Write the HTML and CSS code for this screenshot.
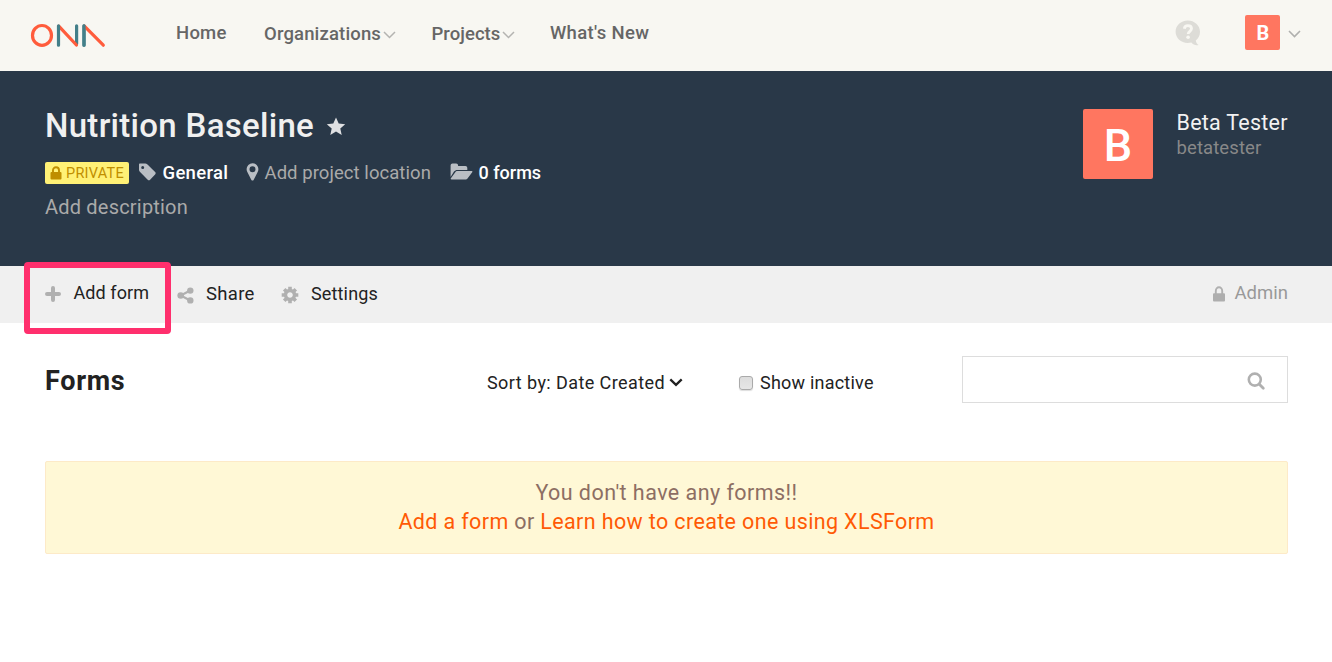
FILE: index.html
```
<!DOCTYPE html>
<html lang="en">
<head>
<meta charset="utf-8">
<title>Nutrition Baseline</title>
<link rel="stylesheet" href="styles.css">
</head>
<body>
<header class="topbar">
  <svg class="logo" width="80" height="30" viewBox="28 20 80 30" fill="none" stroke-width="3.2" stroke-linecap="round">
    <ellipse cx="42" cy="35.4" rx="9.5" ry="9.9" stroke="#ff5c3c"/>
    <path d="M76.6 25.8V44M84 25.8v19.4" stroke="#437f89"/>
    <path d="M58.8 26.2 76.4 45M84.4 26.2 103.3 45.2" stroke="#ff5c3c"/>
    <path d="M58.5 25.8v19.4M84 25.8v19.4" stroke="#437f89"/>
  </svg>
  <nav class="nav">
    <a class="nav-item home">Home</a>
    <a class="nav-item drop orgs"><span>Organizations</span><svg width="13" height="8" viewBox="0 0 13 8"><path d="M1 1l5.5 5.5L12 1" fill="none" stroke="#b4b4b1" stroke-width="1.5"/></svg></a>
    <a class="nav-item drop projects"><span>Projects</span><svg width="13" height="8" viewBox="0 0 13 8"><path d="M1 1l5.5 5.5L12 1" fill="none" stroke="#b4b4b1" stroke-width="1.5"/></svg></a>
    <a class="nav-item news">What's New</a>
  </nav>
  <svg class="help" width="26" height="26" viewBox="0 0 26 26">
    <path d="M12.7.6C19.5.6 25 5.5 25 11.800c0 3.700-1.600 6.700-4.200 8.700.3 2 1.300 3.500 2.800 4.500-2.800.7-5.400-.3-7.200-2.500-1.200.3-2.400.5-3.700.5C5.900 23 .6 18 .6 11.800S5.900.6 12.700.6z" fill="#dddcd7"/>
    <path d="M9.300 8.700c.3-2 1.700-3 3.600-3 2.100 0 3.600 1.100 3.600 2.900 0 2.700-3.300 2.700-3.300 5.400" fill="none" stroke="#f8f7f2" stroke-width="2.800"/>
    <circle cx="13.100" cy="17.300" r="1.800" fill="#f8f7f2"/>
  </svg>
  <div class="avatar small">B</div>
  <svg class="user-chevron" width="13" height="8" viewBox="0 0 13 8"><path d="M1 1l5.500 5.500L12 1" fill="none" stroke="#b0b0ae" stroke-width="1.600"/></svg>
</header>

<section class="project">
  <div class="details">
    <div class="title-row">
      <h1>Nutrition Baseline</h1>
      <svg class="star" width="20" height="19" viewBox="0 0 20 19"><path d="M10 .5l2.700 6 6.500.7-4.900 4.300 1.400 6.400L10 14.600l-5.700 3.300 1.400-6.400L.8 7.200l6.500-.7z" fill="#dfe0e2"/></svg>
    </div>
    <div class="meta">
      <span class="badge"><svg width="12" height="14" viewBox="0 0 12 14"><path d="M3 7V4.200a3 3 0 0 1 6 0V7" fill="none" stroke="#bf8e00" stroke-width="1.900"/><rect x=".5" y="6" width="11" height="7.500" rx="1" fill="#bf8e00"/></svg>PRIVATE</span>
      <svg class="tag" width="19" height="18" viewBox="0 0 19 18"><path fill-rule="evenodd" d="M2 .6h5.200c.8 0 1.600.3 2.300 1l7.600 7.500c.8.8.8 1.600 0 2.400l-5 5.200c-.8.800-1.600.800-2.400 0L2.100 9C1.400 8.300 1 7.500 1 6.700V1.600C1 1 1.400.6 2 .6zM4.700 2.900a1.500 1.500 0 1 0 0 3 1.500 1.500 0 0 0 0-3z" fill="#b9bec4"/></svg>
      <span class="general">General</span>
      <svg class="pin" width="13" height="18" viewBox="0 0 13 18"><path fill-rule="evenodd" d="M6.500.2A5.900 5.900 0 0 1 12.400 6.100c0 1.100-.2 1.900-.6 2.700l-4.200 8.100c-.5.900-1.700.9-2.200 0L1.200 8.800C.8 8 .6 7.200.6 6.100A5.900 5.900 0 0 1 6.500.2zm0 3a3 3 0 1 0 0 6 3 3 0 0 0 0-6z" fill="#b9bec4"/></svg>
      <span class="location">Add project location</span>
      <svg class="folder" width="23" height="18" viewBox="0 0 23 18"><path d="M.6 14V2.500C.6 1.400 1.500.6 2.500.6h3.700c1.100 0 1.900.8 1.900 1.900v.6h7.300c1.100 0 1.900.8 1.900 1.900v2H7.300C6 7 4.900 7.600 4 8.600z" fill="#b9bec4"/><path d="M7.500 8.100h14.100c.8 0 1.100.6.6 1.200l-4.300 5.600c-.8 1-1.600 1.500-2.700 1.500H1.500c-.8 0-1.100-.6-.6-1.200l4.200-5.700c.7-.9 1.400-1.400 2.400-1.400z" fill="#b9bec4"/></svg>
      <span class="count">0 forms</span>
    </div>
    <div class="description">Add description</div>
  </div>
  <div class="avatar large">B</div>
  <div class="owner">
    <div class="owner-name">Beta Tester</div>
    <div class="owner-id">betatester</div>
  </div>
</section>

<div class="toolbar">
  <a class="tool add"><svg width="16" height="16" viewBox="0 0 16 16"><path d="M8 2v12M2 8h12" stroke="#b0b0b0" stroke-width="4" stroke-linecap="round"/></svg><span>Add form</span></a>
  <a class="tool share"><svg width="17" height="17" viewBox="0 0 17 17"><path d="M13.300 3.600 3.700 8.500l9.600 4.900" fill="none" stroke="#b0b0b0" stroke-width="2.200"/><g fill="#b0b0b0"><circle cx="13.300" cy="3.600" r="3.200"/><circle cx="3.700" cy="8.500" r="3.300"/><circle cx="13.300" cy="13.400" r="3.200"/></g></svg><span>Share</span></a>
  <a class="tool settings"><svg width="18" height="18" viewBox="-9 -9 18 18"><g stroke="#b0b0b0" stroke-width="3.600"><path d="M0-8.300V-4M0 8.300V4M-8.300 0H-4M8.300 0H4M-5.800-5.800-3-3M5.800-5.800 3-3M-5.800 5.800-3 3M5.800 5.800 3 3"/></g><circle r="4.500" fill="none" stroke="#b0b0b0" stroke-width="3.400"/></svg><span>Settings</span></a>
  <a class="tool admin"><svg width="14" height="16" viewBox="0 0 14 16"><path d="M3.800 8V5a3.200 3.700 0 0 1 6.400 0v3" fill="none" stroke="#b0b0b0" stroke-width="1.900"/><rect x="1" y="7.300" width="12" height="8.200" rx="1" fill="#aeaeae"/></svg><span>Admin</span></a>
  <div class="highlight"></div>
</div>

<main class="content">
  <div class="filters">
    <h2>Forms</h2>
    <div class="sort"><span>Sort by: Date Created</span><svg width="14" height="9" viewBox="0 0 14 9"><path d="M1.300 1.300 7 6.800l5.700-5.500" fill="none" stroke="#222" stroke-width="2.300"/></svg></div>
    <label class="inactive"><i class="check"></i><span>Show inactive</span></label>
    <div class="search"><svg width="18" height="18" viewBox="0 0 18 18" fill="none" stroke="#b0b0b0"><circle cx="7.800" cy="7.600" r="6" stroke-width="2.600"/><path d="M12.300 12.200l4 4" stroke-width="2.800" stroke-linecap="round"/></svg></div>
  </div>
  <div class="notice">
    <div class="empty">You don't have any forms!!</div>
    <div class="actions"><a>Add a form</a> or <a>Learn how to create one using XLSForm</a></div>
  </div>
</main>
</body>
</html>
```
FILE: styles.css
```
* { box-sizing: border-box; }
body { margin: 0; background: #fff; font: 18px/24px Roboto, "Liberation Sans", sans-serif; color: #222; height: 662px; overflow: hidden; }
svg { display: block; flex: none; overflow: visible; }
span, a, h1, h2, div { white-space: nowrap; }

.topbar { height: 71px; background: #f8f7f2; display: flex; align-items: flex-start; padding-left: 28px; }
.logo { margin-top: 20px; }
.nav { display: grid; grid-template-columns: 88px 167.5px 118.5px 1fr; margin-left: 68px; width: 499px; }
.nav-item { font-size: 18.5px; font-weight: 500; line-height: 66px; color: #666; }
.drop { display: flex; line-height: 68px; }
.drop svg { margin: 31px 0 0 1.5px; }
.home { letter-spacing: .25px; }
.orgs span { letter-spacing: .15px; }
.projects span { letter-spacing: .05px; }
.news { letter-spacing: .33px; }
.help { margin: 20px 0 0 500px; }
.avatar { background: #ff7660; color: #fff; text-align: center; flex: none; border-radius: 2px; }
.small { width: 35px; height: 35px; margin: 15px 0 0 44px; padding-left: 1px; font-size: 20px; font-weight: 700; line-height: 37px; }
.user-chevron { margin: 30px 0 0 8px; }

.project { height: 195px; background: #293848; display: flex; padding: 38px 44px 0 45px; }
.details { width: 1038px; }
.title-row { display: flex; height: 35px; }
h1 { margin: 0; width: 281px; font-size: 33px; font-weight: 500; line-height: 34px; letter-spacing: .3px; color: #f0f0f0; }
.star { margin: 8px 0 0; }
.meta { display: flex; margin-top: 17px; height: 26px; font-size: 18.5px; line-height: 24px; }
.badge { display: flex; width: 84px; height: 22px; margin-top: 1px; padding-left: 5px; background: #fff176; border-radius: 2px; color: #bf8e00; font-size: 14.5px; line-height: 24px; letter-spacing: .25px; }
.badge svg { margin: 3.5px 4px 0 0; }
.tag { margin: 1.5px 5.5px 0 9px; }
.general { width: 84px; font-weight: 500; letter-spacing: .3px; color: #fff; }
.pin { margin: 1.5px 5.5px 0 -.5px; }
.location { width: 185px; letter-spacing: .06px; color: #aaa; }
.folder { margin: 1.5px 6px 0 0; }
.count { font-size: 18px; font-weight: 500; color: #fff; }
.description { margin-top: 6px; font-size: 20px; line-height: 28px; letter-spacing: .2px; color: #aaa; }
.large { width: 70px; height: 70px; font-size: 45px; font-weight: 500; line-height: 73px; }
.owner { margin-left: 23.5px; }
.owner-name { font-size: 21.5px; line-height: 27px; letter-spacing: .25px; color: #f2f2f2; }
.owner-id { font-size: 18.5px; line-height: 25px; letter-spacing: .1px; color: #888; }

.toolbar { position: relative; height: 57px; background: #f0f0f0; display: flex; padding: 0 44px 0 45px; }
.tool { display: flex; line-height: 54px; }
.share, .settings { line-height: 56px; }
.add { width: 131.5px; }
.add svg { margin: 19.5px 12.5px 0 0; }
.add span { letter-spacing: .08px; }
.share { width: 104.5px; font-size: 18.5px; }
.share svg { margin: 20.5px 12.5px 0 0; }
.share span { letter-spacing: .3px; }
.settings svg { margin: 20px 12px 0 0; }
.settings span { letter-spacing: .15px; }
.admin { margin-left: auto; color: #999; font-size: 18.5px; }
.admin svg { margin: 19.5px 8.5px 0 0; }
.highlight { position: absolute; left: 24px; top: -4px; width: 147px; height: 72px; border: 6.5px solid #ff2f6d; border-radius: 4px; }

.content { padding: 33px 44px 0 45px; }
.filters { display: flex; height: 47px; font-size: 18px; line-height: 54px; }
h2 { margin: 0; width: 442px; font-size: 27px; font-weight: 700; line-height: 51px; letter-spacing: .7px; }
.sort { display: flex; width: 252px; }
.sort span { letter-spacing: .42px; }
.sort svg { margin: 22px 0 0 4px; }
.inactive { display: flex; width: 223px; }
.inactive span { letter-spacing: .22px; }
.check { width: 14px; height: 14px; margin: 20px 7px 0 0; border: 1px solid #aaa; border-radius: 3px; background: linear-gradient(#ddd, #e6e6e6); box-shadow: 0 1px 1px #ddd; }
.search { width: 326px; height: 47px; border: 1px solid #ddd; padding: 15px 0 0 283.5px; }
.notice { margin-top: 58px; height: 93px; border: 1px solid #fdeac8; border-radius: 2px; background: #fff8d6; padding-top: 16px; text-align: center; font-size: 21.5px; line-height: 29px; letter-spacing: .45px; color: #8d6e63; }
.actions { letter-spacing: .37px; }
.notice a { color: #ff5a05; }
```
